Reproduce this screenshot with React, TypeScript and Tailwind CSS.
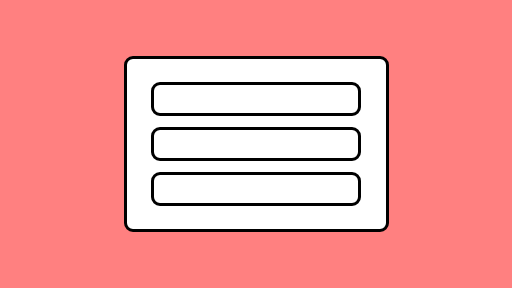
export default function App() {
  return (
    <div className="flex h-[288px] w-[512px] items-center justify-center bg-[#ff8080]">
      <div className="flex h-[176px] w-[265px] flex-col items-center justify-center gap-[11px] rounded-[9px] border-[3.5px] border-black bg-white">
        <div className="h-[34px] w-[210px] rounded-[9px] border-[3.5px] border-black bg-white" />
        <div className="h-[34px] w-[210px] rounded-[9px] border-[3.5px] border-black bg-white" />
        <div className="h-[34px] w-[210px] rounded-[9px] border-[3.5px] border-black bg-white" />
      </div>
    </div>
  );
}
